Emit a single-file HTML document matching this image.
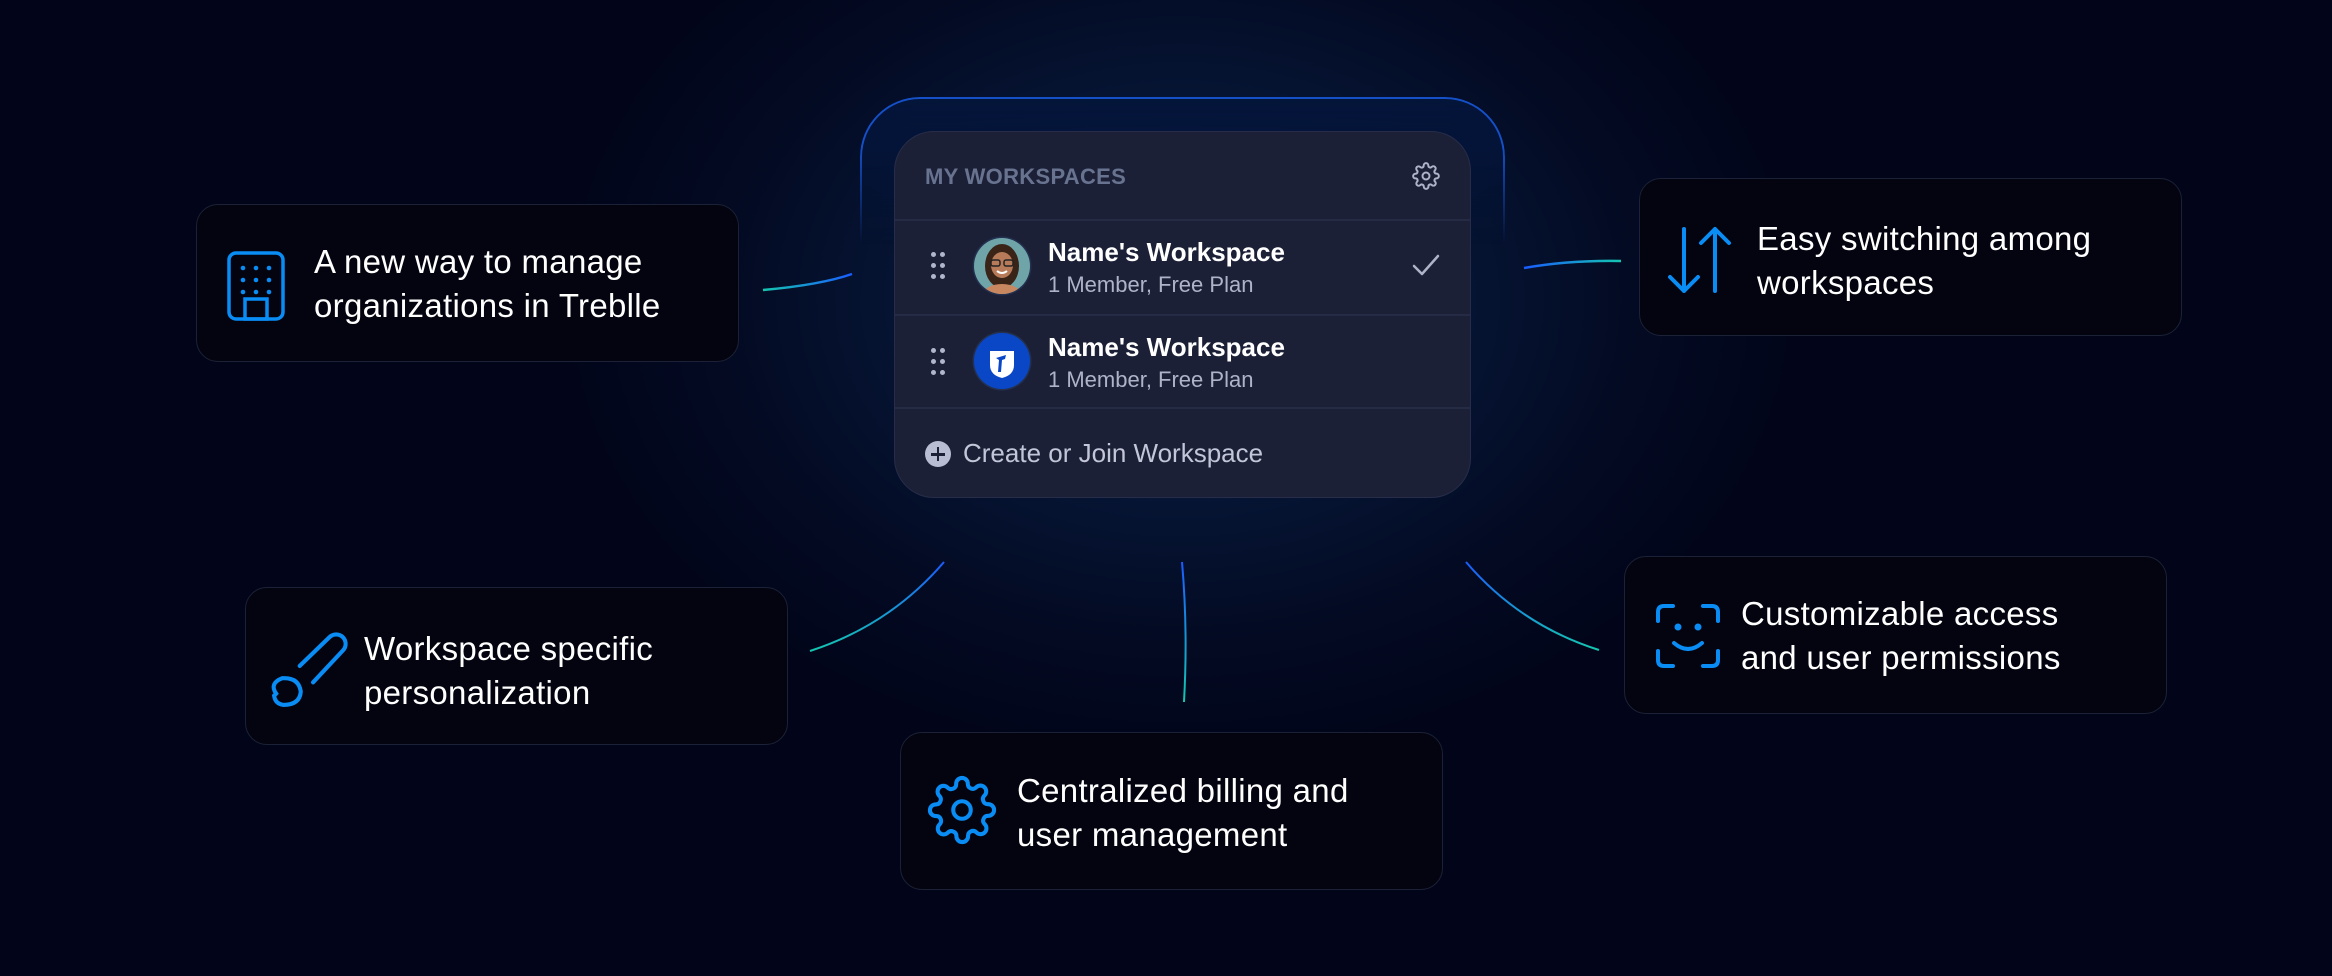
<!DOCTYPE html>
<html><head><meta charset="utf-8"><style>
*{margin:0;padding:0;box-sizing:border-box}
html,body{width:2332px;height:976px;overflow:hidden}
body{position:relative;font-family:"Liberation Sans",sans-serif;
background:radial-gradient(ellipse 620px 460px at 1180px 300px,#0b2a5e 0%,#061636 40%,#030a22 75%,#02051a 100%),#02051a;}
.card{position:absolute;width:543px;height:158px;background:#03040f;border:1.5px solid #1b2136;border-radius:22px}
.card svg{position:absolute}
.card .t{position:absolute;color:#fff;font-size:33px;line-height:44px;letter-spacing:0.3px}
.glow{position:absolute;left:860px;top:97px;width:645px;height:420px;border-radius:60px;border:2px solid #1550c8;border-bottom:none;
background:linear-gradient(#04153a,rgba(4,16,45,0));
-webkit-mask:linear-gradient(#000 12%,transparent 35%);mask:linear-gradient(#000 12%,transparent 35%)}
.panel{position:absolute;left:894px;top:131px;width:577px;height:367px;background:#1c2037;border:1.5px solid #272d48;border-radius:40px;overflow:hidden}
.hr{position:absolute;left:0;right:0;height:2px;background:#262b45}
.hd{position:absolute;left:30px;top:32px;font-size:22px;font-weight:bold;color:#687390;letter-spacing:.3px}
.nm{position:absolute;left:153px;font-size:26px;font-weight:bold;color:#fff}
.sb{position:absolute;left:153px;font-size:22px;color:#aeb3c8}
.dots{position:absolute;left:36px;width:16px;height:28px}
.dots i{position:absolute;width:5px;height:5px;border-radius:50%;background:#b0b6cc}
</style></head><body>

<svg width="2332" height="976" style="position:absolute;left:0;top:0">
<defs>
<linearGradient id="g1" x1="0" x2="1"><stop offset="0" stop-color="#14c6b0"/><stop offset="1" stop-color="#1a5cff"/></linearGradient>
<linearGradient id="g2" x1="1" x2="0"><stop offset="0" stop-color="#14c6b0"/><stop offset="1" stop-color="#1a5cff"/></linearGradient>
<linearGradient id="g3" x1="0" y1="0" x2="0" y2="1"><stop offset="0" stop-color="#1a5cff"/><stop offset="1" stop-color="#14c6b0"/></linearGradient>
</defs>
<path d="M763 290 Q820 285 852 274" stroke="url(#g1)" stroke-width="2.5" fill="none"/>
<path d="M1524 268 Q1570 260 1621 261" stroke="url(#g2)" stroke-width="2.5" fill="none"/>
<path d="M944 562 Q890 625 810 651" stroke="url(#g3)" stroke-width="2" fill="none"/>
<path d="M1182 562 Q1188 630 1184 702" stroke="url(#g3)" stroke-width="2" fill="none"/>
<path d="M1466 562 Q1520 625 1599 650" stroke="url(#g3)" stroke-width="2" fill="none"/>
</svg>

<div class="glow"></div>
<div class="panel">
 <div class="hd">MY WORKSPACES</div>
 <svg style="position:absolute;left:517px;top:30px" width="28" height="28" viewBox="0 0 24 24" fill="none" stroke="#aeb3c8" stroke-width="1.7" stroke-linecap="round" stroke-linejoin="round"><circle cx="12" cy="12" r="3"/><path d="M19.4 15a1.65 1.65 0 0 0 .33 1.820l.06.06a2 2 0 0 1-2.83 2.83l-.06-.06a1.65 1.65 0 0 0-1.820-.33 1.65 1.650 0 0 0-1 1.51V21a2 2 0 0 1-4 0v-.09A1.65 1.65 0 0 0 9 19.4a1.65 1.65 0 0 0-1.82.33l-.06.06a2 2 0 0 1-2.83-2.83l.06-.06a1.65 1.65 0 0 0 .33-1.82 1.65 1.65 0 0 0-1.51-1H3a2 2 0 0 1 0-4h.09A1.65 1.65 0 0 0 4.6 9a1.65 1.65 0 0 0-.33-1.82l-.06-.06a2 2 0 0 1 2.83-2.83l.06.06a1.65 1.65 0 0 0 1.82.33H9a1.65 1.65 0 0 0 1-1.51V3a2 2 0 0 1 4 0v.09a1.65 1.65 0 0 0 1 1.51 1.65 1.65 0 0 0 1.82-.33l.06-.06a2 2 0 0 1 2.83 2.83l-.06.06a1.65 1.65 0 0 0-.33 1.82V9a1.65 1.65 0 0 0 1.51 1H21a2 2 0 0 1 0 4h-.09a1.65 1.65 0 0 0-1.51 1z"/></svg>
 <div class="hr" style="top:87px"></div>
 <div class="dots" style="top:120px"><i style="left:0;top:0"></i><i style="left:9px;top:0"></i><i style="left:0;top:11px"></i><i style="left:9px;top:11px"></i><i style="left:0;top:22px"></i><i style="left:9px;top:22px"></i></div>
 <svg style="position:absolute;left:77px;top:104px" width="60" height="60" viewBox="0 0 60 60"><defs><clipPath id="c"><circle cx="30" cy="30" r="28"/></clipPath></defs><circle cx="30" cy="30" r="29.5" fill="#23304f"/><g clip-path="url(#c)"><rect width="60" height="60" fill="#6fa5a8"/><ellipse cx="30" cy="30" rx="17" ry="22" fill="#3a2418"/><ellipse cx="30" cy="29" rx="11" ry="13" fill="#b87b5a"/><rect x="19" y="24" width="9" height="6" rx="2" fill="none" stroke="#222" stroke-width="1.5"/><rect x="32" y="24" width="9" height="6" rx="2" fill="none" stroke="#222" stroke-width="1.5"/><path d="M25 35 Q30 39 35 35" stroke="#fff" stroke-width="2" fill="none"/><ellipse cx="30" cy="60" rx="20" ry="12" fill="#c9875f"/></g></svg>
 <div class="nm" style="top:105px">Name's Workspace</div>
 <div class="sb" style="top:140px">1 Member, Free Plan</div>
 <svg style="position:absolute;left:516px;top:120px" width="30" height="26" viewBox="0 0 30 26"><path d="M3 14 L11 22 L27 4" stroke="#aeb3c8" stroke-width="2.5" fill="none" stroke-linecap="round" stroke-linejoin="round"/></svg>
 <div class="hr" style="top:182px"></div>
 <div class="dots" style="top:216px"><i style="left:0;top:0"></i><i style="left:9px;top:0"></i><i style="left:0;top:11px"></i><i style="left:9px;top:11px"></i><i style="left:0;top:22px"></i><i style="left:9px;top:22px"></i></div>
 <svg style="position:absolute;left:77px;top:199px" width="60" height="60" viewBox="0 0 60 60"><circle cx="30" cy="30" r="29.5" fill="#23304f"/><circle cx="30" cy="30" r="28" fill="#0a47c6"/><path d="M18 20 H42 V34 Q42 44 30 47 Q18 44 18 34 Z" fill="#fff"/><path d="M24 27 L34 24 L33 28 L30 29 L29 41 L26 41 L27 29 Z" fill="#0a47c6"/></svg>
 <div class="nm" style="top:200px">Name's Workspace</div>
 <div class="sb" style="top:235px">1 Member, Free Plan</div>
 <div class="hr" style="top:275px"></div>
 <div style="position:absolute;left:30px;top:309px;width:26px;height:26px;border-radius:50%;background:#b9bdd4"><div style="position:absolute;left:6px;top:12px;width:14px;height:2.5px;background:#1c2037"></div><div style="position:absolute;left:11.7px;top:6px;width:2.5px;height:14px;background:#1c2037"></div></div>
 <div style="position:absolute;left:68px;top:306px;font-size:26px;color:#c2c6d8">Create or Join Workspace</div>
</div>

<div class="card" style="left:196px;top:204px">
 <svg style="left:30px;top:46px" width="58" height="70" viewBox="0 0 58 70" fill="none" stroke="#0a8cf5" stroke-width="3.5"><rect x="2" y="2" width="54" height="66" rx="7"/><rect x="18" y="48" width="22" height="20"/><g fill="#0a8cf5" stroke="none"><circle cx="16" cy="17" r="2.3"/><circle cx="29" cy="17" r="2.3"/><circle cx="42" cy="17" r="2.3"/><circle cx="16" cy="29" r="2.3"/><circle cx="29" cy="29" r="2.3"/><circle cx="42" cy="29" r="2.3"/><circle cx="16" cy="41" r="2.3"/><circle cx="29" cy="41" r="2.3"/><circle cx="42" cy="41" r="2.3"/></g></svg>
 <div class="t" style="left:117px;top:35px">A new way to manage<br>organizations in Treblle</div>
</div>

<div class="card" style="left:1639px;top:178px">
 <svg style="left:24px;top:46px" width="72" height="70" viewBox="0 0 72 70" fill="none" stroke="#0a8cf5" stroke-width="4" stroke-linecap="round" stroke-linejoin="round"><path d="M20 4 V66 M6 52 L20 66 L34 52"/><path d="M51 66 V4 M37 18 L51 4 L65 18"/></svg>
 <div class="t" style="left:117px;top:38px">Easy switching among<br>workspaces</div>
</div>

<div class="card" style="left:245px;top:587px">
 <svg style="left:24px;top:44px" width="78" height="76" viewBox="20 12 76 74" fill="none" stroke="#0a8cf5" stroke-width="4" stroke-linecap="round"><path d="M49 45 L78 17 A9 9 0 0 1 91 30 L62 61"/><path d="M26 72 Q19 62 32 57 Q48 56 50 70 Q49 83 33 83 Q25 82 24 74 Z"/></svg>
 <div class="t" style="left:118px;top:39px">Workspace specific<br>personalization</div>
</div>

<div class="card" style="left:900px;top:732px">
 <svg style="left:26px;top:42px" width="70" height="70" viewBox="0 0 24 24" fill="none" stroke="#0a8cf5" stroke-width="1.4" stroke-linecap="round" stroke-linejoin="round"><circle cx="12" cy="12" r="3"/><path d="M19.4 15a1.65 1.65 0 0 0 .33 1.82l.06.06a2 2 0 0 1-2.83 2.83l-.06-.06a1.65 1.65 0 0 0-1.82-.33 1.65 1.65 0 0 0-1 1.51V21a2 2 0 0 1-4 0v-.09A1.65 1.65 0 0 0 9 19.4a1.65 1.65 0 0 0-1.82.33l-.06.06a2 2 0 0 1-2.83-2.830l.06-.06a1.65 1.65 0 0 0 .33-1.82 1.65 1.65 0 0 0-1.51-1H3a2 2 0 0 1 0-4h.09A1.65 1.65 0 0 0 4.6 9a1.65 1.65 0 0 0-.33-1.82l-.06-.06a2 2 0 0 1 2.83-2.83l.06.06a1.65 1.65 0 0 0 1.82.33H9a1.65 1.65 0 0 0 1-1.51V3a2 2 0 0 1 4 0v.09a1.65 1.65 0 0 0 1 1.51 1.65 1.65 0 0 0 1.82-.33l.06-.06a2 2 0 0 1 2.83 2.83l-.06.06a1.65 1.65 0 0 0-.33 1.82V9a1.65 1.65 0 0 0 1.51 1H21a2 2 0 0 1 0 4h-.09a1.65 1.65 0 0 0-1.51 1z"/></svg>
 <div class="t" style="left:116px;top:36px">Centralized billing and<br>user management</div>
</div>

<div class="card" style="left:1624px;top:556px">
 <svg style="left:30px;top:46px" width="66" height="66" viewBox="0 0 66 66" fill="none" stroke="#0a8cf5" stroke-width="4" stroke-linecap="round"><path d="M3 18 V9 Q3 3 9 3 H18 M48 3 H57 Q63 3 63 9 V18 M63 48 V57 Q63 63 57 63 H48 M18 63 H9 Q3 63 3 57 V48"/><path d="M19 40 Q33 52 47 40"/><circle cx="23" cy="24" r="1.5" fill="#0a8cf5"/><circle cx="43" cy="24" r="1.5" fill="#0a8cf5"/></svg>
 <div class="t" style="left:116px;top:35px">Customizable access<br>and user permissions</div>
</div>
</body></html>
